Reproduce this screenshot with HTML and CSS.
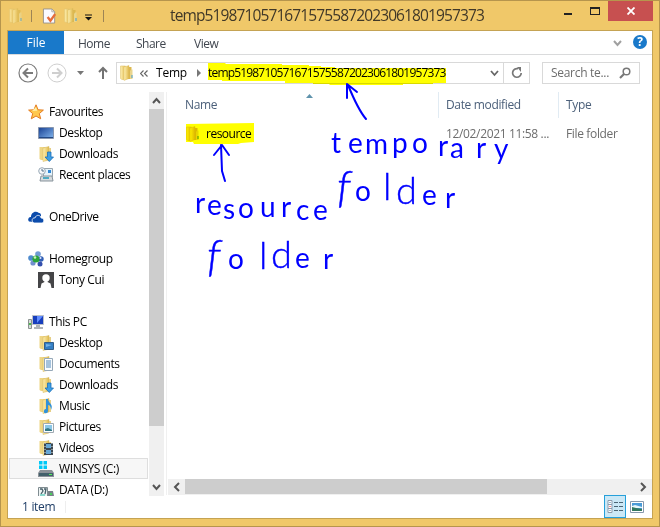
FILE: index.html
```html
<!DOCTYPE html>
<html lang="en">
<head>
<meta charset="utf-8">
<title>temp51987105716715755872023061801957373</title>
<link rel="stylesheet" href="styles.css">
</head>
<body>
<svg class="defs" width="0" height="0">
  <defs>
    <linearGradient id="gold"><stop offset="0" stop-color="#fff0b0"/><stop offset="1" stop-color="#dfb94d"/></linearGradient>
    <linearGradient id="screen" x2="1" y2="1"><stop offset="0" stop-color="#173f92"/><stop offset="1" stop-color="#84b7ee"/></linearGradient>
    <symbol id="folder" viewBox="0 0 16 16"><path d="M1.500 1h5v13.500H3l-1.500-1z" fill="url(#gold)" stroke="#e0c470" stroke-width=".6"/><path d="M7 2h5.500v12H7z" fill="#dcb84f"/><path d="M5 2l5-1.500v13L5 15.500z" fill="url(#gold)" stroke="#d9b95c" stroke-width=".4"/><path d="M12 4.500h1.500v9.500H11V6z" fill="#ead58d"/><path d="M12.500 10h1v3h-1z" fill="#459dce"/></symbol>
    <symbol id="folder-s" viewBox="0 0 16 16"><path d="M1.500 1h6v13H3l-1.500-1z" fill="#eed584"/><path d="M5 2l6-1.500v13.500l-6 1.500z" fill="url(#gold)" stroke="#d2b45d" stroke-width=".5"/><path d="M11 2h2v12h-2z" fill="#e6cf86"/></symbol>
    <symbol id="star" viewBox="0 0 16 16"><path d="M8 .8l2.100 5 5.300.3-4.100 3.500 1.400 5.200L8 12l-4.700 2.800 1.400-5.200L.6 6.100l5.300-.3z" fill="#ffc84d" stroke="#e47b20" stroke-width="1"/><path d="M8 3l1.200 3.700H8L4 7z" fill="#fff1a8"/></symbol>
    <symbol id="desktop" viewBox="0 0 16 16"><path d="M.5 2.500h15v11H.5z" fill="url(#screen)" stroke="#8795ad"/><path d="M1 12h14v1H1z" fill="#234985"/></symbol>
    <symbol id="downloads" viewBox="0 0 16 16"><use href="#folder-s"/><path d="M9.500 6h3.500v5h2.500L11.300 15.500 7 11h2.500z" fill="#3c9ee5" stroke="#1d70b7" stroke-width=".8"/></symbol>
    <symbol id="recent" viewBox="0 0 16 16"><path d="M5.500 1.500h9v8h-9z" fill="#e5f3fb" stroke="#9aa6af"/><path d="M10 3h3v3h-3z" fill="#2f87d5"/><path d="M3 9h11l1 5H2z" fill="#d7dcdf" stroke="#87939b"/><path d="M5 10h6v2H5z" fill="#4daac2"/><circle cx="4" cy="4" r="3.300" fill="#f7f9fb" stroke="#98a8b5"/><path d="M4 2v2h2" fill="none" stroke="#57738a"/></symbol>
    <symbol id="cloud" viewBox="0 0 16 16"><path d="M1 12.500c-2-2 0-5 2-4.500C3 4 7 1 11 4c2 0 2 2 2 3l-7 6z" fill="#0c4cac"/><path d="M5 13.500c-2-3 0-5 2-4.500 1-4 6-3 6 0 4 0 3 5 1 5H6z" fill="#0c4cac" stroke="#fff" stroke-width=".8"/></symbol>
    <symbol id="home" viewBox="0 0 16 16"><circle cx="3" cy="7" r="2.800" fill="#4d8bce"/><circle cx="10" cy="3" r="2.800" fill="#6f9bd4"/><circle cx="13" cy="8" r="2.700" fill="#315fb5"/><circle cx="5" cy="12" r="2.600" fill="#718fce"/><circle cx="12" cy="13" r="2.500" fill="#344fad"/><circle cx="8" cy="8" r="3.600" fill="#2ba43c"/><circle cx="7" cy="6.500" r="1.300" fill="#c9f4ba"/><circle cx="12.500" cy="7" r="1" fill="#dbe8ff"/></symbol>
    <symbol id="user" viewBox="0 0 16 16"><path d="M0 0h16v16H0z" fill="#454547"/><circle cx="8" cy="6" r="3.700" fill="#fff"/><path d="M6.500 8h3v2l3 1.500 1 4.500H2.500l1-4.500 3-1.500z" fill="#fff"/></symbol>
    <symbol id="pc" viewBox="0 0 16 16"><path d="M.5 5.500h3v9h-3z" fill="#d7dcd9" stroke="#8b9291"/><path d="M1 9h2v2H1z" fill="#4cb94f"/><path d="M4.500 1.500h11v9h-11z" fill="#173ebd" stroke="#bbc0c8"/><path d="M9 2h6L9 9z" fill="#628dff"/><path d="M8 11h4v2h3v2H6v-2h2z" fill="#aeb3b8"/></symbol>
    <symbol id="f-desktop" viewBox="0 0 16 16"><use href="#folder-s"/><path d="M6.500 7.500h9v7h-9z" fill="#347fc5" stroke="#345e89"/><path d="M8 9l6 1-6 2z" fill="#75b4e9"/></symbol>
    <symbol id="f-docs" viewBox="0 0 16 16"><use href="#folder-s"/><path d="M6.500 2.500h8v12h-8z" fill="#f9fcff" stroke="#96a8b8"/><path d="M8 5h5M8 7h5M8 9h5M8 11h5" stroke="#5089bb"/></symbol>
    <symbol id="f-music" viewBox="0 0 16 16"><use href="#folder-s"/><path d="M10 1c0 4 6 5 3 11 0-3-1-5-3-5v6c0 3-5 3-4 0 0-2 2-2 2-2V1z" fill="#3092da"/></symbol>
    <symbol id="f-pics" viewBox="0 0 16 16"><use href="#folder-s"/><path d="M5.500 4.500h10v9h-10z" fill="#f9fcff" stroke="#a0aab2"/><path d="M7 6h7v6H7z" fill="#8bc7e7"/><path d="M7 10l3-1 4 2v1H7z" fill="#347986"/></symbol>
    <symbol id="f-video" viewBox="0 0 16 16"><use href="#folder-s"/><path d="M6 3h9v12H6z" fill="#3b464f"/><path d="M8 4h5v4H8zM8 10h5v4H8z" fill="#65a6d5"/><path d="M7 3v12M14 3v12" stroke="#dce2e4" stroke-dasharray="1 2"/></symbol>
    <symbol id="drive" viewBox="0 0 16 16"><path d="M1 0h3.500v3.500H1zM5.500 0H9v3.500H5.500zM1 4.500h3.500V8H1zM5.500 4.500H9V8H5.500z" fill="#00c9f7"/><path d="M2 9h12l2 3v4H0v-4z" fill="#8a9197"/><path d="M1 12h14v3H1z" fill="#43606b"/><path d="M11 13h3v1h-3z" fill="#57ed5c"/></symbol>
    <symbol id="data" viewBox="0 0 16 16"><path d="M.5 5.500h9v9h-9z" fill="#eef4f4" stroke="#808c91"/><path d="M2 7h2l1 2-2 3M6 7h2L7 12" fill="none" stroke="#485f69" stroke-width="1.300"/><path d="M2 13h5" stroke="#24b8a2"/><path d="M10 9h5l1 5h-6z" fill="#778289"/><path d="M12 11h2v2h-2z" fill="#4ace5a"/></symbol>
  </defs>
</svg>
<div class="window">
  <header class="titlebar">
    <div class="quick">
      <svg class="q1" viewBox="0 0 16 16"><use href="#folder"/></svg>
      <i class="sep"></i>
      <svg class="q2" viewBox="0 0 16 16"><path d="M1.500.5h9l3 3v12h-12z" fill="#fafaff" stroke="#96928c"/><path d="M10.500.5v3h3" fill="none" stroke="#aaa"/><path d="M6 9l3 4 5-7" fill="none" stroke="#e66c3b" stroke-width="2.500"/></svg>
      <svg class="q3" viewBox="0 0 16 16"><use href="#folder"/></svg>
      <svg class="q4" viewBox="0 0 8 8"><path d="M0 1h7" stroke="#111"/><path d="M0 3h7L3.500 6.500z" fill="#111"/></svg>
      <i class="sep"></i>
    </div>
    <h1 class="title">temp51987105716715755872023061801957373</h1>
    <div class="controls">
      <i class="minimize"></i><i class="maximize"></i>
      <span class="close"><svg width="8" height="8" viewBox="0 0 8 8"><path d="M.5.5l7 7M7.500.5l-7 7" stroke="#fff" stroke-width="1.800"/></svg></span>
    </div>
  </header>
  <div class="client">
    <nav class="ribbon">
      <span class="file">File</span><span class="home">Home</span><span class="share">Share</span><span class="view">View</span>
      <svg class="expand" width="9" height="7" viewBox="0 0 9 7"><path d="M1 1l3.500 4L8 1" fill="none" stroke="#a0a0a0" stroke-width="2"/></svg>
      <span class="help">?</span>
    </nav>
    <div class="navigation">
      <svg class="arrows" width="92" height="22" viewBox="0 0 92 22"><g fill="none" stroke="#7b7b7b"><circle cx="12" cy="11" r="9" stroke-width="1.200"/><path d="M17 11H8M12 6.500L7.500 11l4.500 4.500" stroke-width="2"/></g><g fill="none" stroke="#cfcfcf"><circle cx="41" cy="11" r="9"/><path d="M36 11h9M41 6.500l4.500 4.500-4.500 4.500" stroke-width="2"/></g><path d="M61 9h7l-3.500 4z" fill="#777"/><path d="M87 17V6M83 10l4-4 4 4" fill="none" stroke="#737373" stroke-width="2"/></svg>
      <div class="address">
        <svg class="icon" viewBox="0 0 16 16"><use href="#folder"/></svg>
        <svg class="more" width="8" height="7" viewBox="0 0 8 7"><path d="M3.500.5l-3 3 3 3M7.500.5l-3 3 3 3" fill="none" stroke="#666" stroke-width="1.200"/></svg>
        <span class="parent">Temp</span>
        <svg class="crumb" width="5" height="8" viewBox="0 0 5 8"><path d="M0 0l4 4-4 4z" fill="#777"/></svg>
        <span class="path">temp51987105716715755872023061801957373</span>
        <svg class="drop" width="9" height="7" viewBox="0 0 9 7"><path d="M1 1l3.500 4L8 1" fill="none" stroke="#666" stroke-width="1.800"/></svg>
        <span class="refresh"><svg width="12" height="12" viewBox="0 0 12 12"><path d="M7 1.800A4.300 4.300 0 1 0 10.200 6" fill="none" stroke="#777" stroke-width="1.700"/><path d="M6 0h4v5z" fill="#777"/></svg></span>
      </div>
      <div class="search"><span>Search te...</span><svg width="12" height="12" viewBox="0 0 12 12"><circle cx="7.500" cy="4.500" r="3.300" fill="none" stroke="#777" stroke-width="1.500"/><path d="M5 7L1 11" stroke="#777" stroke-width="2.200"/></svg></div>
    </div>
    <div class="body">
      <aside class="sidebar">
        <ul class="tree">
          <li class="top"><svg class="icon"><use href="#star"/></svg>Favourites</li>
          <li><svg class="icon"><use href="#desktop"/></svg>Desktop</li>
          <li><svg class="icon"><use href="#downloads"/></svg>Downloads</li>
          <li><svg class="icon"><use href="#recent"/></svg>Recent places</li>
          <li class="top gap"><svg class="icon"><use href="#cloud"/></svg>OneDrive</li>
          <li class="top gap"><svg class="icon"><use href="#home"/></svg>Homegroup</li>
          <li><svg class="icon"><use href="#user"/></svg>Tony Cui</li>
          <li class="top gap"><svg class="icon"><use href="#pc"/></svg>This PC</li>
          <li><svg class="icon"><use href="#f-desktop"/></svg>Desktop</li>
          <li><svg class="icon"><use href="#f-docs"/></svg>Documents</li>
          <li><svg class="icon"><use href="#downloads"/></svg>Downloads</li>
          <li><svg class="icon"><use href="#f-music"/></svg>Music</li>
          <li><svg class="icon"><use href="#f-pics"/></svg>Pictures</li>
          <li><svg class="icon"><use href="#f-video"/></svg>Videos</li>
          <li class="selected"><svg class="icon"><use href="#drive"/></svg>WINSYS (C:)</li>
          <li><svg class="icon"><use href="#data"/></svg>DATA (D:)</li>
        </ul>
        <div class="vscroll">
          <svg viewBox="0 0 15 17"><path d="M4 11l3.500-4 3.500 4" fill="none" stroke="#555" stroke-width="2"/></svg>
          <i></i>
          <svg viewBox="0 0 15 17"><path d="M4 6l3.500 4L11 6" fill="none" stroke="#555" stroke-width="2"/></svg>
        </div>
      </aside>
      <main class="content">
        <div class="columns"><span class="name">Name<svg width="7" height="4" viewBox="0 0 7 4"><path d="M0 4l3.500-4L7 4z" fill="#5f93ac"/></svg></span><span class="date">Date modified</span><span class="type">Type</span></div>
        <div class="item"><span class="name"><svg class="icon"><use href="#folder"/></svg>resource</span><span class="date">12/02/2021 11:58 ...</span><span class="type">File folder</span></div>
        <div class="hscroll">
          <svg viewBox="0 0 17 16"><path d="M11 4L7 8l4 4" fill="none" stroke="#555" stroke-width="2"/></svg>
          <i></i>
          <svg viewBox="0 0 17 16"><path d="M6 4l4 4-4 4" fill="none" stroke="#555" stroke-width="2"/></svg>
        </div>
      </main>
    </div>
    <footer class="status"><span class="count">1 item</span>
      <span class="details"><svg width="16" height="14" viewBox="0 0 16 14"><g fill="#fff" stroke="#8b9bad"><path d="M1 .5h4v4H1zM1 4.500h4v4H1zM1 8.500h4v4H1z"/></g><path d="M2.500 2h1v1h-1zM2.500 10h1v1h-1z" fill="#357999"/><path d="M2.500 6h1v1h-1z" fill="#e22"/><path d="M7 2.500h4m1 0h4M7 6.500h4m1 0h4M7 10.500h4m1 0h4" stroke="#4c6675"/></svg></span>
      <svg class="preview" width="14" height="12" viewBox="0 0 14 12"><path d="M.5.5h13v11H.5z" fill="#fff" stroke="#8798ad"/><path d="M2 2h10v8H2z" fill="#4a9ad7"/><path d="M2 5l3-1 7 2v1H2z" fill="#e8f5f9"/><path d="M2 6l4 1 6 1v2H2z" fill="#32785f"/></svg>
    </footer>
  </div>
  <svg class="highlights" viewBox="0 0 660 527"><path d="M208 63h17l1 1h56v1h27v1h12v1h14v1h111v15h-13v1h-30v1h-73l-1-1h-16v-1h-28v-2h-63v-1h-14v-2zM186 124l68-1v19l-13 1-3 1h-44l-1-2h-7z"/></svg>
  <svg class="notes" viewBox="0 0 660 527">
    <g class="ink"><path d="M366 119c-6-7-11-17-18-34M347 98V84l10 8"/><path d="M225 181l-3-10-1-26M214 155l8-10 7 10"/></g>
    <text class="hand" x="331 348 365 392 412 438 450 476 494" y="153 153 154 153 153 156 158 158 159">temporary</text>
    <text class="hand" x="337 355 383 396 422 445" y="202 201 200 204 205 208"><tspan class="slant">f</tspan>o<tspan class="tall">ld</tspan>er</text>
    <text class="hand" x="195 207 223 238 260 281 296 313" y="213 215 219 218 217 217 220 220">resource</text>
    <text class="hand" x="207 228 259 271 295 323" y="271 269 269 268 268 269"><tspan class="slant">f</tspan>o<tspan class="tall">ld</tspan>er</text>
  </svg>
</div>
</body>
</html>
```

FILE: styles.css
```css
* { box-sizing: border-box; }
body { margin: 0; font: 12px/16px "Open Sans", "Noto Sans", sans-serif; color: #000; overflow: hidden; }
.defs { position: absolute; }
svg { display: block; flex: none; }
.icon { width: 16px; height: 16px; }
.window { position: relative; width: 660px; height: 527px; background: #f0c869; border: 1px solid #b6954d; padding: 0 6px 7px; display: flex; flex-direction: column; }
.titlebar { height: 29px; display: flex; flex: none; }
.quick { display: flex; align-items: center; height: 29px; width: 163px; flex: none; }
.q1, .q3 { width: 16px; height: 16px; }
.q1 { margin-left: 1px; opacity: .75; }
.q2 { width: 15px; height: 16px; margin-left: 10px; margin-right: 6px; }
.q4 { width: 8px; height: 8px; margin-left: 6px; margin-right: 10px; margin-top: 4px; }
.sep { width: 1px; height: 12px; background: #9d8455; margin-left: 7px; }
.q4 + .sep { margin-left: 0; }
.title { margin: 0; width: 320px; font-size: 15.500px; line-height: 29px; font-weight: 400; letter-spacing: -.88px; color: #403828; white-space: nowrap; }
.controls { display: flex; margin-left: auto; height: 20px; }
.minimize { width: 8px; height: 2px; background: #222; margin: 12px 18px 0 0; }
.maximize { width: 10px; height: 8px; border: 1px solid #222; border-top-width: 2px; margin: 6px 8px 0 0; }
.close { width: 45px; background: #c75050; display: flex; align-items: center; justify-content: center; }
.client { background: #fff; border: 1px solid #c5a353; flex: 1; display: flex; flex-direction: column; min-height: 0; }
.ribbon { height: 24px; display: flex; line-height: 26px; border-bottom: 1px solid #dadbdc; flex: none; color: #40464f; }
.file { width: 56px; height: 23px; background: #1979ca; color: #fff; text-align: center; line-height: 24px; }
.home { margin-left: 14px; width: 58px; }
.home, .share, .view { letter-spacing: -.5px; }
.share { width: 58px; }
.expand { margin: 9px 11px 0 auto; }
.help { width: 14px; height: 14px; border-radius: 50%; background: #1979ca; color: #fff; font-weight: 700; text-align: center; line-height: 14px; margin: 4px 5px 0 0; }
.navigation { height: 37px; display: flex; align-items: flex-start; padding-top: 7px; flex: none; }
.arrows { margin: 0 0 0 8px; }
.navigation .arrows + .address { margin-left: 8px; }
.address { height: 22px; width: 414px; border: 1px solid #d9d9d9; display: flex; align-items: center; flex: none; }
.address .icon { margin-left: 2px; }
.more { margin-left: 5px; }
.parent { margin-left: 8px; width: 32px; letter-spacing: -.2px; }
.crumb { margin-left: 9px; }
.path { margin-left: 6px; width: 238px; letter-spacing: -.82px; white-space: nowrap; }
.drop { margin-left: auto; }
.refresh { width: 26px; height: 20px; border-left: 1px solid #d9d9d9; margin-left: 4px; display: grid; place-items: center; }
.search { width: 98px; height: 22px; border: 1px solid #d9d9d9; margin-left: 12px; padding: 0 8px; display: flex; align-items: center; justify-content: space-between; color: #6d6d6d; flex: none; white-space: nowrap; letter-spacing: -.3px; }
.body { flex: 1; min-height: 0; display: flex; }
.sidebar { width: 159px; display: flex; border-right: 1px solid #f0f0f0; }
.tree { list-style: none; padding: 9px 0 0; margin: 0; width: 141px; height: 404px; overflow: hidden; letter-spacing: -.4px; }
.tree li { height: 21px; padding-left: 28px; display: flex; align-items: center; gap: 5px; border: 1px solid transparent; margin: 0 1px; white-space: nowrap; }
.tree .top { padding-left: 18px; }
.tree .gap { margin-top: 21px; }
.tree .selected { border-color: #dedede; background: #f7f7f7; }
.vscroll { width: 15px; height: 404px; background: #f0f0f0; display: flex; flex-direction: column; }
.vscroll svg { width: 15px; height: 17px; }
.vscroll i { height: 317px; background: #cdcdcd; }
.vscroll svg:last-child { margin-top: auto; }
.content { flex: 1; display: flex; flex-direction: column; }
.columns, .item { display: flex; letter-spacing: -.35px; white-space: nowrap; }
.columns { height: 26px; line-height: 26px; color: #4c607a; }
.name { width: 272px; padding-left: 18px; flex: none; }
.columns .name { display: flex; border-right: 1px solid #e1ebf3; }
.columns .name svg { margin: 2px 0 0 89px; }
.date { width: 120px; padding-left: 7px; flex: none; }
.item .date { letter-spacing: -.35px; }
.columns .date { border-right: 1px solid #e1ebf3; }
.type { padding-left: 7px; }
.item { height: 22px; margin-top: 5px; line-height: 22px; color: #6d6d6d; }
.item .name { display: flex; align-items: center; gap: 5px; color: #000; letter-spacing: -.5px; }
.hscroll { height: 16px; margin: auto 0 0 1px; background: #f0f0f0; display: flex; }
.hscroll svg { width: 17px; height: 16px; }
.hscroll i { width: 362px; height: 15px; background: #cdcdcd; }
.hscroll svg:last-child { margin-left: auto; }
.status { height: 23px; display: flex; align-items: center; flex: none; color: #1e3d66; }
.count { margin-left: 14px; width: 44px; height: 12px; line-height: 12px; border-right: 1px solid #eee; letter-spacing: -.3px; }
.details { margin-left: auto; width: 22px; height: 23px; border: 1px solid #26a0da; background: #cbe8f6; display: grid; place-items: center; }
.preview { margin: 0 8px 0 4px; }
.highlights, .notes { position: absolute; left: -1px; top: -1px; width: 660px; height: 527px; pointer-events: none; }
.highlights { fill: #ff0; mix-blend-mode: multiply; }
.ink { fill: none; stroke: #00f; stroke-width: 2; stroke-linecap: round; stroke-linejoin: round; }
.hand { font-family: Lato, sans-serif; font-size: 28px; fill: #00f; }
.slant { font-size: 44px; font-style: italic; font-weight: 300; stroke: #00f; stroke-width: .5px; }
.tall { font-size: 38px; font-weight: 300; stroke: #00f; stroke-width: .4px; }
```
